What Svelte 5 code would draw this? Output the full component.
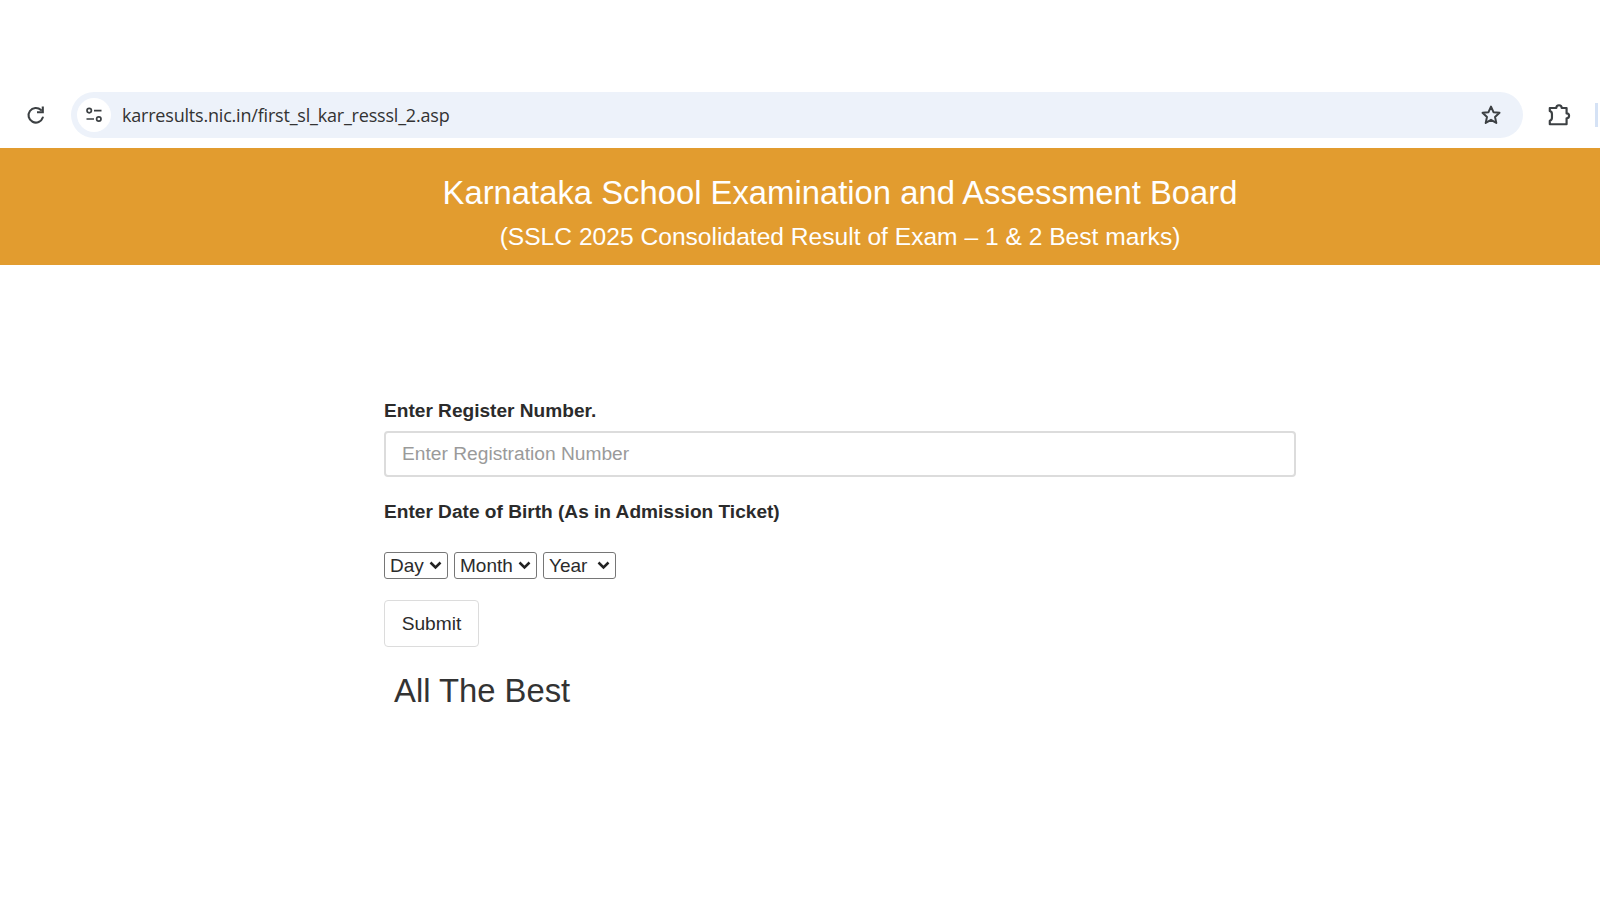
<script>
  const days = ['Day'];
  const months = ['Month'];
  const years = ['Year'];
</script>

<div class="page">
  <div class="chrome">
    <svg class="reload" viewBox="0 0 24 24" width="24" height="24" fill="none" stroke="#3c4043" stroke-width="2.1">
      <path d="M18.800 14.500A7.300 7.300 0 1 1 17 7.100" stroke-linecap="round"/>
      <path d="M18.800 3.400v5.800h-5.800"/>
    </svg>
    <div class="omnibox">
      <span class="tune">
        <svg viewBox="0 0 20 20" width="20" height="20" fill="none" stroke="#3c4043" stroke-width="1.7">
          <circle cx="5.200" cy="5.600" r="2.200"/>
          <path d="M10 5.600h7.500M2.500 14h7.500"/>
          <circle cx="14.800" cy="14" r="2.200"/>
        </svg>
      </span>
      <span class="url">karresults.nic.in/first_sl_kar_resssl_2.asp</span>
      <svg class="star" viewBox="0 0 24 24" width="24" height="24" fill="none" stroke="#3c4043" stroke-width="2" stroke-linejoin="round">
        <path d="M12 3.600l2.500 5.600 6 .6-4.500 4.100 1.300 6L12 16.800l-5.300 3.100 1.300-6-4.500-4.100 6-.6z"/>
      </svg>
    </div>
    <svg class="ext" viewBox="0 0 24 24" width="26" height="26" fill="none" stroke="#3c4043" stroke-width="2" stroke-linejoin="round">
      <path d="M3.500 5.500h6a2.500 2.500 0 0 1 5 0h4.500v5a2.300 2.300 0 0 1 0 4.600v5.400H3.500v-3.200a3 3 0 0 0 2-2.800v-3.500a3 3 0 0 0-2-2.800z"/>
    </svg>
    <span class="sliver"></span>
  </div>

  <header class="banner">
    <h1>Karnataka School Examination and Assessment Board</h1>
    <h2>(SSLC 2025 Consolidated Result of Exam – 1 &amp; 2 Best marks)</h2>
  </header>

  <form class="form" onsubmit={(e) => e.preventDefault()}>
    <label class="lbl" for="reg">Enter Register Number.</label>
    <input id="reg" class="field" type="text" placeholder="Enter Registration Number" />
    <p class="lbl dob">Enter Date of Birth (As in Admission Ticket)</p>
    <div class="dates">
      <select class="d">{#each days as d}<option>{d}</option>{/each}</select>
      <select class="m">{#each months as m}<option>{m}</option>{/each}</select>
      <select class="y">{#each years as y}<option>{y}</option>{/each}</select>
    </div>
    <button class="submit" type="submit">Submit</button>
    <h3 class="best">All The Best</h3>
  </form>
</div>

<style>
  :global(body) {
    margin: 0;
    background: #fff;
    font-family: "Liberation Sans", Arial, sans-serif;
    color: #2b2b2b;
  }
  .page {
    width: 1600px;
    height: 900px;
    overflow: hidden;
  }
  .chrome {
    height: 148px;
    box-sizing: border-box;
    padding: 92px 0 10px 24px;
    display: flex;
    align-items: center;
  }
  .reload {
    flex: none;
    margin-right: 23px;
  }
  .omnibox {
    width: 1452px;
    height: 46px;
    box-sizing: border-box;
    background: #edf2fa;
    border-radius: 23px;
    display: flex;
    align-items: center;
    padding: 0 20px 0 6px;
    flex: none;
  }
  .tune {
    width: 34px;
    height: 34px;
    border-radius: 50%;
    background: #fff;
    display: flex;
    align-items: center;
    justify-content: center;
    flex: none;
  }
  .url {
    margin-left: 11px;
    font-family: "Open Sans", "Noto Sans", sans-serif;
    font-size: 18px;
    letter-spacing: -0.2px;
    color: #333;
    flex: 1;
  }
  .ext {
    flex: none;
    margin-left: 23px;
  }
  .sliver {
    width: 3px;
    height: 24px;
    background: #d5e2f5;
    margin-left: 23px;
    flex: none;
  }
  .banner {
    height: 117px;
    box-sizing: border-box;
    background: #e29c2f;
    color: #fff;
    padding: 26px 0 0 80px;
    text-align: center;
  }
  .banner h1 {
    margin: 0;
    font-size: 32.8px;
    line-height: 38px;
    font-weight: 400;
  }
  .banner h2 {
    margin: 10px 0 0;
    font-size: 24.6px;
    line-height: 29px;
    font-weight: 400;
  }
  .form {
    width: 912px;
    margin: 0 0 0 384px;
    padding-top: 134px;
  }
  .lbl {
    display: block;
    margin: 0;
    font-size: 19.1px;
    line-height: 24px;
    font-weight: 700;
    color: #2b2b2b;
  }
  .field {
    display: block;
    width: 100%;
    height: 46px;
    box-sizing: border-box;
    margin-top: 8px;
    padding: 0 16px;
    border: 2px solid #dcdcdc;
    border-radius: 4px;
    font: 400 19.2px "Liberation Sans", Arial, sans-serif;
    color: #495057;
    outline: none;
  }
  .field::placeholder {
    color: #9a9a9a;
    opacity: 1;
  }
  .dob {
    margin-top: 23px;
  }
  .dates {
    display: flex;
    gap: 6px;
    margin-top: 28px;
    height: 27px;
  }
  select {
    appearance: none;
    height: 27px;
    box-sizing: border-box;
    font: 400 19px "Liberation Sans", Arial, sans-serif;
    color: #2b2b2b;
    background: #fff url("data:image/svg+xml,%3Csvg xmlns='http://www.w3.org/2000/svg' width='13' height='9'%3E%3Cpath d='M1.500 1.500L6.500 6.500l5-5' fill='none' stroke='%23222' stroke-width='2.500'/%3E%3C/svg%3E") no-repeat right 5px center;
    border: 1px solid #767676;
    border-radius: 3px;
    padding: 0 0 0 5px;
  }
  .d { width: 64px; }
  .m { width: 83px; }
  .y { width: 73px; }
  .submit {
    display: block;
    margin-top: 21px;
    width: 95px;
    height: 47px;
    box-sizing: border-box;
    background: #fff;
    border: 1px solid #dcdcdc;
    border-radius: 4px;
    font: 400 19.2px "Liberation Sans", Arial, sans-serif;
    color: #2b2b2b;
    padding: 0;
  }
  .best {
    margin: 24px 0 0 10px;
    font-size: 32.8px;
    line-height: 40px;
    font-weight: 400;
    color: #333;
  }
</style>
